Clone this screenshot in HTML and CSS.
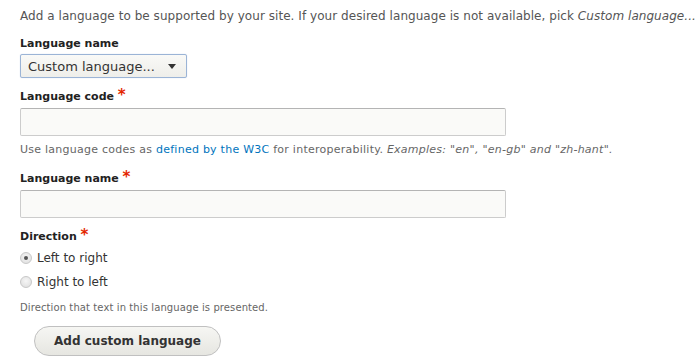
FILE: index.html
```html
<!DOCTYPE html>
<html>
<head>
<meta charset="utf-8">
<link rel="stylesheet" href="styles.css">
</head>
<body>
<form class="form">
  <p class="intro">Add a language to be supported by your site. If your desired language is not available, pick <em>Custom language...</em></p>

  <div class="item item-select">
    <label class="label">Language name</label>
    <div class="select">
      <span class="select-text">Custom language...</span>
      <span class="select-arrow"></span>
    </div>
  </div>

  <div class="item item-code">
    <label class="label">Language code <span class="req">*</span></label>
    <div class="input"></div>
    <div class="desc">Use language codes as <a class="link">defined by the W3C</a> for interoperability. <em>Examples: "en", "en-gb" and "zh-hant".</em></div>
  </div>

  <div class="item item-name">
    <label class="label">Language name <span class="req">*</span></label>
    <div class="input"></div>
  </div>

  <div class="item item-dir">
    <label class="label">Direction <span class="req">*</span></label>
    <div class="radios">
      <div class="radio-row"><span class="radio checked"></span><span class="radio-label">Left to right</span></div>
      <div class="radio-row"><span class="radio"></span><span class="radio-label">Right to left</span></div>
    </div>
    <div class="desc desc-dir">Direction that text in this language is presented.</div>
  </div>

  <div class="actions">
    <button type="button" class="button">Add custom language</button>
  </div>
</form>
</body>
</html>
```

FILE: styles.css
```css
html, body {
  margin: 0;
  padding: 0;
  background: #ffffff;
}
body {
  font-family: "DejaVu Sans", Verdana, sans-serif;
  color: #333333;
  width: 700px;
  height: 362px;
  overflow: hidden;
}
.form {
  padding: 8px 0 0 20px;
}
.intro {
  margin: 0;
  font-size: 12px;
  letter-spacing: 0.05px;
  line-height: 16px;
  color: #555555;
  white-space: nowrap;
}
.item {
  display: flex;
  flex-direction: column;
  align-items: flex-start;
}
.label {
  font-weight: bold;
  font-size: 11px;
  line-height: 16px;
  height: 16px;
  color: #222222;
}
.req {
  color: #e32700;
  font-size: 15px;
  line-height: 0;
}
.item-select { margin-top: 12px; }
.select {
  margin-top: 2px;
  height: 22px;
  border: 1px solid #9bb4d6;
  border-radius: 2px;
  background: linear-gradient(#f9f9f7, #eeeeea);
  box-shadow: 0 0 1px #b9c9e3;
  display: flex;
  align-items: center;
  justify-content: space-between;
  padding: 0 10px 0 7px;
  box-sizing: content-box;
  width: 148px;
}
.select-text {
  font-size: 13px;
  color: #333;
}
.select-arrow {
  width: 0;
  height: 0;
  border-left: 4px solid transparent;
  border-right: 4px solid transparent;
  border-top: 5px solid #333;
}
.item-code { margin-top: 11px; }
.input {
  margin-top: 3px;
  width: 484px;
  height: 26px;
  border: 1px solid #cccccc;
  border-top-color: #b4b4b4;
  border-radius: 2px;
  background: #fafaf8;
}
.desc {
  margin-top: 7px;
  font-size: 11px;
  letter-spacing: 0.25px;
  line-height: 14px;
  color: #666666;
}
.link { color: #0074bd; text-decoration: none; }
.item-name { margin-top: 14px; }
.item-dir { margin-top: 11px; }
.radios {
  display: flex;
  flex-direction: column;
  gap: 8px;
  margin-top: 5px;
}
.radio-row {
  display: flex;
  align-items: center;
  gap: 5px;
  height: 16px;
}
.radio {
  width: 10px;
  height: 10px;
  border-radius: 50%;
  border: 1px solid #c8c8c8;
  background: radial-gradient(circle at 50% 40%, #f6f6f6, #dcdcdc);
  position: relative;
}
.radio.checked::after {
  content: "";
  position: absolute;
  left: 3px;
  top: 3px;
  width: 4px;
  height: 4px;
  border-radius: 50%;
  background: #555;
}
.radio-label {
  font-size: 12px;
  color: #333;
}
.desc-dir {
  margin-top: 11px;
  font-size: 10px;
  letter-spacing: 0.1px;
}
.actions {
  margin-top: 11px;
  padding-left: 14px;
}
.button {
  font-family: inherit;
  width: 187px;
  height: 30px;
  border: 1px solid #c0c0c0;
  border-radius: 15px;
  background: linear-gradient(#f6f6f3, #e6e6e1);
  font-weight: bold;
  font-size: 12px;
  color: #333;
  padding: 0;
}
```
